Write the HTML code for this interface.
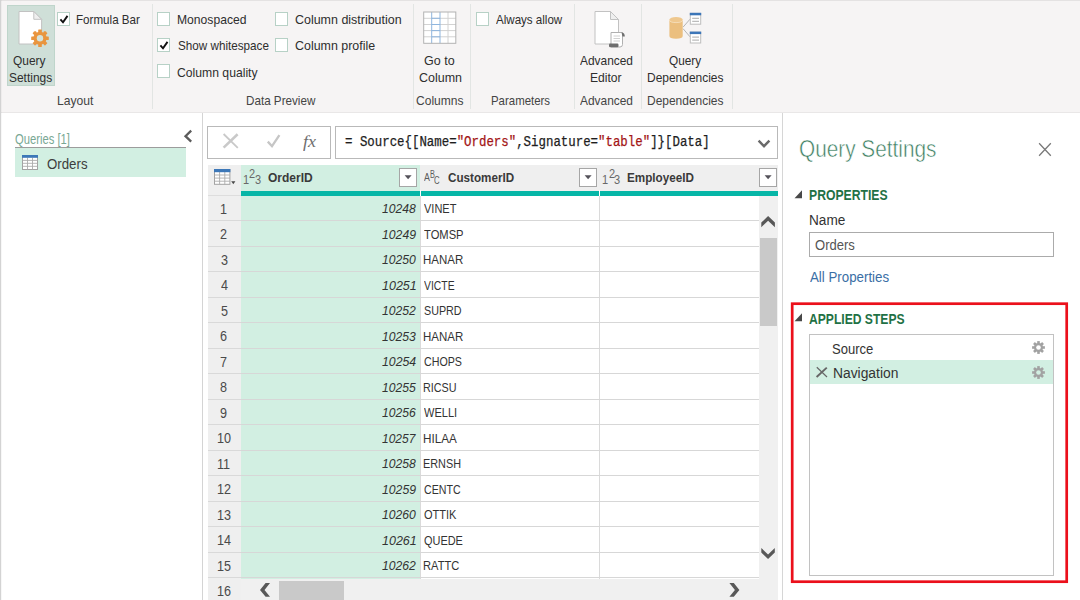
<!DOCTYPE html>
<html lang="en">
<head>
<meta charset="utf-8">
<title>Power Query Editor</title>
<style>
*{box-sizing:border-box;margin:0;padding:0}
html,body{width:1080px;height:600px;overflow:hidden;background:#fff}
body{position:relative;font-family:"Liberation Sans",sans-serif;color:#333;font-size:13px}
.a{position:absolute}
svg{position:absolute;overflow:visible}
.t{position:absolute;white-space:nowrap;line-height:16px;height:16px;transform-origin:0 0}
#ribbon{left:0;top:0;width:1080px;height:113px;background:#f6f4f4}
.sep{position:absolute;top:4px;width:1px;height:105px;background:#e2e5e3}
.cb{position:absolute;width:13px;height:14px;background:#fff;border:1px solid #b7d1c6}
</style>
</head>
<body>
<!-- RIBBON -->
<div id="ribbon" class="a">
<div class="a" style="left:0;top:0;width:1080px;height:1px;background:#e4e2e2"></div>
<div class="a" style="left:0;top:112px;width:1080px;height:1px;background:#e9e7e7"></div>
<div class="a" style="left:7px;top:5px;width:48px;height:81px;background:#cfdfd8;border:1px solid #bfd5cb"></div>
<svg style="left:0;top:0" width="60" height="60" viewBox="0 0 60 60">
 <path d="M19 11.5H33.8L41.6 19.3V44H19Z" fill="#fff" stroke="#c2c2c2" stroke-width="1"/>
 <path d="M33.8 11.5V19.3H41.6Z" fill="#efefef" stroke="#c2c2c2" stroke-width="1" stroke-linejoin="round"/>
 <g transform="translate(40,38.2)" fill="#e9953f">
  <rect x="-1.8" y="-8.8" width="3.6" height="17.6" rx="0.6"/>
  <rect x="-1.8" y="-8.8" width="3.6" height="17.6" rx="0.6" transform="rotate(45)"/>
  <rect x="-1.8" y="-8.8" width="3.6" height="17.6" rx="0.6" transform="rotate(90)"/>
  <rect x="-1.8" y="-8.8" width="3.6" height="17.6" rx="0.6" transform="rotate(135)"/>
  <circle r="6.5"/>
  <circle r="3.2" fill="#d4e3dc"/>
 </g>
</svg>
<div class="t" style="left:13.35px;top:53px;transform:scaleX(0.9166);color:#2e2e2e">Query</div>
<div class="t" style="left:8.94px;top:70px;transform:scaleX(0.9181);color:#2e2e2e">Settings</div>
<div class="cb" style="left:57px;top:12px"></div>
<svg style="left:57px;top:12px" width="13" height="14" viewBox="0 0 13 14"><path d="M3.4 7.4L6 10.3L10.5 3.9" fill="none" stroke="#111" stroke-width="1.9"/></svg>
<div class="t" style="left:75.81px;top:12px;transform:scaleX(0.8936);color:#2e2e2e">Formula Bar</div>
<div class="t" style="left:57.37px;top:93px;transform:scaleX(0.9324);color:#444">Layout</div>
<div class="sep" style="left:152px"></div>
<div class="cb" style="left:157px;top:12px"></div>
<div class="t" style="left:177.07px;top:12px;transform:scaleX(0.9331);color:#2e2e2e">Monospaced</div>
<div class="cb" style="left:157px;top:38px"></div>
<svg style="left:157px;top:38px" width="13" height="14" viewBox="0 0 13 14"><path d="M3.4 7.4L6 10.3L10.5 3.9" fill="none" stroke="#111" stroke-width="1.9"/></svg>
<div class="t" style="left:177.55px;top:38px;transform:scaleX(0.8988);color:#2e2e2e">Show whitespace</div>
<div class="cb" style="left:157px;top:64px"></div>
<div class="t" style="left:177.44px;top:65px;transform:scaleX(0.9369);color:#2e2e2e">Column quality</div>
<div class="cb" style="left:275px;top:12px"></div>
<div class="t" style="left:295.18px;top:12px;transform:scaleX(0.9582);color:#2e2e2e">Column distribution</div>
<div class="cb" style="left:275px;top:38px"></div>
<div class="t" style="left:295.43px;top:38px;transform:scaleX(0.9554);color:#2e2e2e">Column profile</div>
<div class="t" style="left:246.10px;top:93px;transform:scaleX(0.8964);color:#444">Data Preview</div>
<div class="sep" style="left:413px"></div>
<svg style="left:0;top:0" width="470" height="50" viewBox="0 0 470 50">
 <rect x="423.7" y="12" width="32.1" height="31.3" fill="#fff"/>
 <g stroke="#d2d2d2" stroke-width="1" fill="none">
  <path d="M423.7 18.3H455.8M423.7 24.5H455.8M423.7 30.6H455.8M423.7 36.8H455.8M448 12V43.3"/>
 </g>
 <g stroke="#8fb6de" stroke-width="1" fill="none">
  <path d="M431.7 12V43.3M440 12V43.3M431.7 18.3H440M431.7 24.5H440M431.7 30.6H440M431.7 36.8H440"/>
 </g>
 <rect x="423.7" y="12" width="32.1" height="31.3" fill="none" stroke="#b2b2b2" stroke-width="1"/>
</svg>
<div class="t" style="left:424.42px;top:53px;transform:scaleX(0.9620);color:#2e2e2e">Go to</div>
<div class="t" style="left:418.62px;top:70px;transform:scaleX(0.9593);color:#2e2e2e">Column</div>
<div class="t" style="left:416.14px;top:93px;transform:scaleX(0.9265);color:#444">Columns</div>
<div class="sep" style="left:470px"></div>
<div class="cb" style="left:476px;top:12px"></div>
<div class="t" style="left:496.20px;top:12px;transform:scaleX(0.8896);color:#2e2e2e">Always allow</div>
<div class="t" style="left:490.82px;top:93px;transform:scaleX(0.8786);color:#444">Parameters</div>
<div class="sep" style="left:574px"></div>
<svg style="left:0;top:0" width="640" height="50" viewBox="0 0 640 50">
 <path d="M595 11.5H610.5L618.5 19.5V44H595Z" fill="#fff" stroke="#c2c2c2" stroke-width="1"/>
 <path d="M610.5 11.5V19.5H618.5Z" fill="#efefef" stroke="#c2c2c2" stroke-width="1" stroke-linejoin="round"/>
 <path d="M611 32.5H622.5V44.5Q622.5 47 620 47H611Z" fill="#fff" stroke="#b0b0b0" stroke-width="1"/>
 <path d="M613.5 36H620M613.5 38.5H620M613.5 41H620" stroke="#d0d0d0" stroke-width="1"/>
 <rect x="609" y="43.5" width="9.5" height="3.8" rx="1.2" fill="#6e6e6e"/>
 <path d="M621.5 32.5Q624.8 32.5 624.8 36.5H622.5Z" fill="#6e6e6e"/>
</svg>
<div class="t" style="left:580.00px;top:53px;transform:scaleX(0.9159);color:#2e2e2e">Advanced</div>
<div class="t" style="left:589.87px;top:70px;transform:scaleX(0.9290);color:#2e2e2e">Editor</div>
<div class="t" style="left:580.00px;top:93px;transform:scaleX(0.9159);color:#444">Advanced</div>
<div class="sep" style="left:641px"></div>
<svg style="left:0;top:0" width="740" height="50" viewBox="0 0 740 50">
 <path d="M683 27.2L690 19.2M683 28.6L690 36.8" stroke="#b4b4b4" stroke-width="1" fill="none"/>
 <path d="M669.4 19.8V36Q669.4 38.8 676 38.8Q682.7 38.8 682.7 36V19.8Z" fill="#ebbf7f"/>
 <ellipse cx="676.05" cy="19.8" rx="6.65" ry="2.8" fill="#efc88f"/>
 <path d="M669.4 19.8Q669.4 22.6 676.05 22.6Q682.7 22.6 682.7 19.8" fill="none" stroke="#f8e6cb" stroke-width="0.7"/>
<g transform="translate(0,0)">
  <rect x="690.3" y="13.4" width="10.4" height="10.8" fill="#fff" stroke="#bdbdbd" stroke-width="1"/>
  <rect x="689.8" y="12.8" width="11.4" height="2.5" fill="#3c76b8"/>
  <path d="M692.2 18.4H699M692.2 21.3H699" stroke="#bcbcbc" stroke-width="1.2"/>
 </g><g transform="translate(0,18.8)">
  <rect x="690.3" y="13.4" width="10.4" height="10.8" fill="#fff" stroke="#bdbdbd" stroke-width="1"/>
  <rect x="689.8" y="12.8" width="11.4" height="2.5" fill="#3c76b8"/>
  <path d="M692.2 18.4H699M692.2 21.3H699" stroke="#bcbcbc" stroke-width="1.2"/>
 </g>
</svg>
<div class="t" style="left:668.66px;top:53px;transform:scaleX(0.9080);color:#2e2e2e">Query</div>
<div class="t" style="left:646.88px;top:70px;transform:scaleX(0.9203);color:#2e2e2e">Dependencies</div>
<div class="t" style="left:646.88px;top:93px;transform:scaleX(0.9203);color:#444">Dependencies</div>
<div class="sep" style="left:732px"></div>
</div>
<!-- QUERIES PANE -->
<div class="a" style="left:0;top:0;width:1px;height:600px;background:#d3d3d3"></div><div class="a" style="left:1px;top:0;width:1px;height:600px;background:rgba(0,0,0,.03)"></div>
<div class="a" style="left:202px;top:113px;width:1px;height:487px;background:#d4d4d4"></div>
<div class="t" style="left:14.84px;top:131px;transform:scaleX(0.7735);font-size:14.5px;color:#79a894">Queries [1]</div>
<svg style="left:180px;top:126px" width="16" height="20" viewBox="0 0 16 20"><path d="M11.2 4.7L5.5 10.2L11.2 15.7" fill="none" stroke="#5c5c5c" stroke-width="2.3"/></svg>
<div class="a" style="left:15px;top:146.5px;width:171px;height:1.5px;background:#9c9c9c"></div>
<div class="a" style="left:15px;top:148px;width:171px;height:29px;background:#d2efe2"></div>
<svg style="left:22px;top:155px" width="16" height="15" viewBox="0 0 16 15">
 <rect x="0.5" y="0.5" width="15" height="14" fill="#fff" stroke="#a2a2a2"/>
 <path d="M0.5 5.4H15.5M0.5 8.3H15.5M0.5 11.3H15.5M5.5 2.7V14.5M10.5 2.7V14.5" stroke="#ababab" stroke-width="0.9" fill="none"/>
 <rect x="0" y="0" width="16" height="2.8" fill="#3d78b8"/>
</svg>
<div class="t" style="left:47.43px;top:156px;transform:scaleX(0.9476);font-size:14px;color:#3d3d3d">Orders</div>
<!-- FORMULA BAR -->
<div class="a" style="left:207px;top:126px;width:124px;height:33px;border:1px solid #b9b9b9;background:#fff"></div>
<div class="a" style="left:335px;top:126px;width:443px;height:33px;border:1px solid #b9b9b9;background:#fff"></div>
<svg style="left:207px;top:126px" width="124" height="33" viewBox="0 0 124 33">
 <path d="M16.6 8L30.8 21.8" stroke="#c9c9c9" stroke-width="1.8" fill="none"/>
 <path d="M30.6 8.3L16.6 21.6" stroke="#c9c9c9" stroke-width="2.6" fill="none"/>
 <path d="M60.8 15.6L65 20.2L72.4 9.2" stroke="#c6c6c6" stroke-width="2.3" fill="none"/>
</svg>
<div class="t" style="left:303.00px;top:125px;transform:scaleX(1.0351);font-size:17.5px;line-height:32px;height:32px;font-family:'Liberation Serif',serif;font-style:italic;color:#6e6e6e">fx</div>
<div class="t" style="left:345.07px;top:135px;transform:scaleX(0.8988);font-size:13.8px;font-family:'Liberation Mono',monospace;color:#1e1e1e;-webkit-text-stroke:0.25px currentColor">= Source{[Name=<span style="color:#a31515">"Orders"</span>,Signature=<span style="color:#a31515">"table"</span>]}[Data]</div>
<svg style="left:755px;top:136px" width="18" height="14" viewBox="0 0 18 14"><path d="M3.6 4.6L9 10.2L14.4 4.6" fill="none" stroke="#6a6a6a" stroke-width="2.4"/></svg>
<!-- GRID -->
<div class="a" style="left:208px;top:165px;width:33px;height:435px;background:#efefef"></div>
<div class="a" style="left:241px;top:165px;width:179px;height:414px;background:#d2efe2"></div>
<div class="a" style="left:420px;top:165px;width:358px;height:26px;background:#efefef"></div>
<div class="a" style="left:241px;top:190.5px;width:537px;height:5px;background:#06b6a7"></div>
<div class="a" style="left:419.5px;top:190px;width:1px;height:6px;background:#fff"></div>
<div class="a" style="left:599px;top:190px;width:1px;height:6px;background:#fff"></div>
<div class="a" style="left:208px;top:194.5px;width:33px;height:1px;background:#dddddd"></div>
<div class="a" style="left:420px;top:196px;width:1px;height:383px;background:#dadada"></div>
<div class="a" style="left:599px;top:196px;width:1px;height:383px;background:#dadada"></div>
<svg style="left:213.7px;top:169.3px" width="24" height="16" viewBox="0 0 24 16">
 <rect x="0.5" y="0.5" width="15.4" height="14.8" fill="#fff" stroke="#a2a2a2"/>
 <path d="M0.5 6H15.9M0.5 9.1H15.9M0.5 12.2H15.9M5.6 3V15.3M10.8 3V15.3" stroke="#ababab" stroke-width="0.9" fill="none"/>
 <rect x="0" y="0" width="16.4" height="3.2" fill="#3d78b8"/>
 <path d="M17.2 12.3H21.4L19.3 15.2Z" fill="#4a4a4a"/>
</svg>
<div class="t" style="left:242.64px;top:172px;transform:scaleX(0.8800);font-size:12.5px;color:#686868">1</div><div class="t" style="left:249.22px;top:166px;transform:scaleX(0.8800);font-size:12.5px;color:#686868">2</div><div class="t" style="left:254.61px;top:172px;transform:scaleX(0.8800);font-size:12.5px;color:#686868">3</div>
<div class="t" style="left:267.74px;top:170px;transform:scaleX(0.9238);font-weight:bold;color:#3a3a3a">OrderID</div>
<div class="t" style="left:423.65px;top:169px;transform:scaleX(0.8200);font-size:10.8px;color:#5c5c5c">A</div><div class="t" style="left:429.95px;top:166px;transform:scaleX(0.6800);font-size:10.8px;color:#5c5c5c">B</div><div class="t" style="left:434.26px;top:172px;transform:scaleX(0.7200);font-size:10.8px;color:#5c5c5c">C</div>
<div class="t" style="left:447.55px;top:170px;transform:scaleX(0.8970);font-weight:bold;color:#3a3a3a">CustomerID</div>
<div class="t" style="left:602.34px;top:172px;transform:scaleX(0.8800);font-size:12.5px;color:#686868">1</div><div class="t" style="left:608.92px;top:166px;transform:scaleX(0.8800);font-size:12.5px;color:#686868">2</div><div class="t" style="left:614.31px;top:172px;transform:scaleX(0.8800);font-size:12.5px;color:#686868">3</div>
<div class="t" style="left:627.08px;top:170px;transform:scaleX(0.8998);font-weight:bold;color:#3a3a3a">EmployeeID</div>
<div class="a" style="left:399px;top:168px;width:18px;height:19px;background:#fff;border:1px solid #a6a6a6"></div><svg style="left:399px;top:168px" width="18" height="19" viewBox="0 0 18 19"><path d="M5.6 7.3H12.6L9.1 11.3Z" fill="#55525a"/></svg>
<div class="a" style="left:579px;top:168px;width:18px;height:19px;background:#fff;border:1px solid #a6a6a6"></div><svg style="left:579px;top:168px" width="18" height="19" viewBox="0 0 18 19"><path d="M5.6 7.3H12.6L9.1 11.3Z" fill="#55525a"/></svg>
<div class="a" style="left:759px;top:168px;width:18px;height:19px;background:#fff;border:1px solid #a6a6a6"></div><svg style="left:759px;top:168px" width="18" height="19" viewBox="0 0 18 19"><path d="M5.6 7.3H12.6L9.1 11.3Z" fill="#55525a"/></svg>
<div class="a" style="left:208px;top:220.0px;width:33px;height:1px;background:#d9d9d9"></div>
<div class="a" style="left:241px;top:220.0px;width:518px;height:1px;background:#d7d7d7"></div>
<div class="t" style="left:220.31px;top:201px;transform:scaleX(0.9000);font-size:14px;color:#4a4a4a">1</div>
<div class="t" style="left:381.92px;top:201px;transform:scaleX(0.9352);font-style:italic;color:#333">10248</div>
<div class="t" style="left:424.20px;top:201px;transform:scaleX(0.8464);color:#333">VINET</div>
<div class="a" style="left:208px;top:245.5px;width:33px;height:1px;background:#d9d9d9"></div>
<div class="a" style="left:241px;top:245.5px;width:518px;height:1px;background:#d7d7d7"></div>
<div class="t" style="left:220.49px;top:226px;transform:scaleX(0.9000);font-size:14px;color:#4a4a4a">2</div>
<div class="t" style="left:381.92px;top:227px;transform:scaleX(0.9405);font-style:italic;color:#333">10249</div>
<div class="t" style="left:424.03px;top:227px;transform:scaleX(0.8600);color:#333">TOMSP</div>
<div class="a" style="left:208px;top:271.0px;width:33px;height:1px;background:#d9d9d9"></div>
<div class="a" style="left:241px;top:271.0px;width:518px;height:1px;background:#d7d7d7"></div>
<div class="t" style="left:220.53px;top:252px;transform:scaleX(0.9000);font-size:14px;color:#4a4a4a">3</div>
<div class="t" style="left:381.92px;top:252px;transform:scaleX(0.9352);font-style:italic;color:#333">10250</div>
<div class="t" style="left:423.32px;top:252px;transform:scaleX(0.8835);color:#333">HANAR</div>
<div class="a" style="left:208px;top:296.5px;width:33px;height:1px;background:#d9d9d9"></div>
<div class="a" style="left:241px;top:296.5px;width:518px;height:1px;background:#d7d7d7"></div>
<div class="t" style="left:220.53px;top:277px;transform:scaleX(0.9000);font-size:14px;color:#4a4a4a">4</div>
<div class="t" style="left:381.91px;top:278px;transform:scaleX(0.9621);font-style:italic;color:#333">10251</div>
<div class="t" style="left:424.20px;top:278px;transform:scaleX(0.7987);color:#333">VICTE</div>
<div class="a" style="left:208px;top:322.0px;width:33px;height:1px;background:#d9d9d9"></div>
<div class="a" style="left:241px;top:322.0px;width:518px;height:1px;background:#d7d7d7"></div>
<div class="t" style="left:220.53px;top:303px;transform:scaleX(0.9000);font-size:14px;color:#4a4a4a">5</div>
<div class="t" style="left:381.92px;top:303px;transform:scaleX(0.9379);font-style:italic;color:#333">10252</div>
<div class="t" style="left:423.79px;top:303px;transform:scaleX(0.8262);color:#333">SUPRD</div>
<div class="a" style="left:208px;top:347.5px;width:33px;height:1px;background:#d9d9d9"></div>
<div class="a" style="left:241px;top:347.5px;width:518px;height:1px;background:#d7d7d7"></div>
<div class="t" style="left:220.44px;top:328px;transform:scaleX(0.9000);font-size:14px;color:#4a4a4a">6</div>
<div class="t" style="left:381.92px;top:329px;transform:scaleX(0.9352);font-style:italic;color:#333">10253</div>
<div class="t" style="left:423.32px;top:329px;transform:scaleX(0.8835);color:#333">HANAR</div>
<div class="a" style="left:208px;top:373.0px;width:33px;height:1px;background:#d9d9d9"></div>
<div class="a" style="left:241px;top:373.0px;width:518px;height:1px;background:#d7d7d7"></div>
<div class="t" style="left:220.49px;top:354px;transform:scaleX(0.9000);font-size:14px;color:#4a4a4a">7</div>
<div class="t" style="left:381.92px;top:354px;transform:scaleX(0.9458);font-style:italic;color:#333">10254</div>
<div class="t" style="left:423.71px;top:354px;transform:scaleX(0.8211);color:#333">CHOPS</div>
<div class="a" style="left:208px;top:398.5px;width:33px;height:1px;background:#d9d9d9"></div>
<div class="a" style="left:241px;top:398.5px;width:518px;height:1px;background:#d7d7d7"></div>
<div class="t" style="left:220.49px;top:379px;transform:scaleX(0.9000);font-size:14px;color:#4a4a4a">8</div>
<div class="t" style="left:381.92px;top:380px;transform:scaleX(0.9326);font-style:italic;color:#333">10255</div>
<div class="t" style="left:423.37px;top:380px;transform:scaleX(0.8295);color:#333">RICSU</div>
<div class="a" style="left:208px;top:424.0px;width:33px;height:1px;background:#d9d9d9"></div>
<div class="a" style="left:241px;top:424.0px;width:518px;height:1px;background:#d7d7d7"></div>
<div class="t" style="left:220.49px;top:405px;transform:scaleX(0.9000);font-size:14px;color:#4a4a4a">9</div>
<div class="t" style="left:381.92px;top:405px;transform:scaleX(0.9326);font-style:italic;color:#333">10256</div>
<div class="t" style="left:424.20px;top:405px;transform:scaleX(0.8496);color:#333">WELLI</div>
<div class="a" style="left:208px;top:449.5px;width:33px;height:1px;background:#d9d9d9"></div>
<div class="a" style="left:241px;top:449.5px;width:518px;height:1px;background:#d7d7d7"></div>
<div class="t" style="left:216.76px;top:430px;transform:scaleX(0.9000);font-size:14px;color:#4a4a4a">10</div>
<div class="t" style="left:381.92px;top:431px;transform:scaleX(0.9224);font-style:italic;color:#333">10257</div>
<div class="t" style="left:423.30px;top:431px;transform:scaleX(0.8989);color:#333">HILAA</div>
<div class="a" style="left:208px;top:475.0px;width:33px;height:1px;background:#d9d9d9"></div>
<div class="a" style="left:241px;top:475.0px;width:518px;height:1px;background:#d7d7d7"></div>
<div class="t" style="left:217.27px;top:456px;transform:scaleX(0.9000);font-size:14px;color:#4a4a4a">11</div>
<div class="t" style="left:381.92px;top:456px;transform:scaleX(0.9352);font-style:italic;color:#333">10258</div>
<div class="t" style="left:423.37px;top:456px;transform:scaleX(0.8341);color:#333">ERNSH</div>
<div class="a" style="left:208px;top:500.5px;width:33px;height:1px;background:#d9d9d9"></div>
<div class="a" style="left:241px;top:500.5px;width:518px;height:1px;background:#d7d7d7"></div>
<div class="t" style="left:216.85px;top:481px;transform:scaleX(0.9000);font-size:14px;color:#4a4a4a">12</div>
<div class="t" style="left:381.92px;top:482px;transform:scaleX(0.9405);font-style:italic;color:#333">10259</div>
<div class="t" style="left:423.71px;top:482px;transform:scaleX(0.8172);color:#333">CENTC</div>
<div class="a" style="left:208px;top:526.0px;width:33px;height:1px;background:#d9d9d9"></div>
<div class="a" style="left:241px;top:526.0px;width:518px;height:1px;background:#d7d7d7"></div>
<div class="t" style="left:216.81px;top:507px;transform:scaleX(0.9000);font-size:14px;color:#4a4a4a">13</div>
<div class="t" style="left:381.92px;top:507px;transform:scaleX(0.9352);font-style:italic;color:#333">10260</div>
<div class="t" style="left:423.69px;top:507px;transform:scaleX(0.8483);color:#333">OTTIK</div>
<div class="a" style="left:208px;top:551.5px;width:33px;height:1px;background:#d9d9d9"></div>
<div class="a" style="left:241px;top:551.5px;width:518px;height:1px;background:#d7d7d7"></div>
<div class="t" style="left:216.72px;top:532px;transform:scaleX(0.9000);font-size:14px;color:#4a4a4a">14</div>
<div class="t" style="left:381.91px;top:533px;transform:scaleX(0.9621);font-style:italic;color:#333">10261</div>
<div class="t" style="left:423.70px;top:533px;transform:scaleX(0.8415);color:#333">QUEDE</div>
<div class="a" style="left:208px;top:577.0px;width:33px;height:1px;background:#d9d9d9"></div>
<div class="a" style="left:241px;top:577.0px;width:518px;height:1px;background:#d7d7d7"></div>
<div class="t" style="left:216.81px;top:558px;transform:scaleX(0.9000);font-size:14px;color:#4a4a4a">15</div>
<div class="t" style="left:381.92px;top:558px;transform:scaleX(0.9379);font-style:italic;color:#333">10262</div>
<div class="t" style="left:423.34px;top:558px;transform:scaleX(0.8562);color:#333">RATTC</div>
<div class="t" style="left:216.81px;top:583px;transform:scaleX(0.9000);font-size:14px;color:#4a4a4a">16</div>
<div class="a" style="left:759px;top:196px;width:19px;height:383px;background:#f0f0f0"></div>
<div class="a" style="left:760px;top:238px;width:17px;height:88px;background:#c9c9c9"></div>
<div class="a" style="left:241px;top:579px;width:537px;height:21px;background:#f0f0f0"></div>
<div class="a" style="left:279px;top:581px;width:65px;height:19px;background:#c9c9c9"></div>
<svg style="left:0;top:0" width="1080" height="600" viewBox="0 0 1080 600"><g fill="#585858"><path d="M761.3 227.2V222.6L768.1 216L774.9 222.6V227.2L768.1 220.7Z"/><path d="M761.3 548V552.6L768.05 559L774.8 552.6V548L768.05 554.4Z"/><path d="M270 583H265.6L260 589.9L265.6 596.8H270L264.5 589.9Z"/><path d="M729.4 583H733.8L739.4 589.9L733.8 596.8H729.4L734.9 589.9Z"/></g></svg>
<!-- QUERY SETTINGS -->
<div class="a" style="left:782px;top:113px;width:1px;height:487px;background:#d6d6d6"></div>
<div class="t" style="left:799.07px;top:133px;transform:scaleX(0.8482);font-size:24.5px;line-height:32px;height:32px;color:#3a7d5e;-webkit-text-stroke:0.55px #fff">Query Settings</div>
<svg style="left:1036px;top:141px" width="18" height="18" viewBox="0 0 18 18"><path d="M3.1 2.3L14.8 14.7M14.8 2.3L3.1 14.7" stroke="#787878" stroke-width="1.25" fill="none"/></svg>
<svg style="left:794px;top:190.2px" width="9" height="9" viewBox="0 0 9 9"><path d="M8 0.3V8.2H0.5Z" fill="#484848"/></svg>
<div class="t" style="left:809.24px;top:187px;transform:scaleX(0.8405);font-size:14.5px;font-weight:bold;color:#1f7145">PROPERTIES</div>
<div class="t" style="left:808.53px;top:212px;transform:scaleX(0.9731);font-size:14px;color:#333">Name</div>
<div class="a" style="left:809px;top:231.5px;width:245px;height:25.5px;border:1px solid #ababab;background:#fff"></div>
<div class="t" style="left:815.34px;top:237px;transform:scaleX(0.9308);font-size:14px;color:#555">Orders</div>
<div class="t" style="left:809.60px;top:269px;transform:scaleX(0.9498);font-size:14px;color:#3a6ea5">All Properties</div>
<svg style="left:0;top:0" width="1080" height="600" viewBox="0 0 1080 600"><rect x="792.2" y="303.7" width="274.5" height="278" fill="none" stroke="#eb101b" stroke-width="2.7"/></svg>
<svg style="left:794px;top:313.1px" width="9" height="9" viewBox="0 0 9 9"><path d="M8 0.3V8.2H0.5Z" fill="#484848"/></svg>
<div class="t" style="left:809.45px;top:311px;transform:scaleX(0.8351);font-size:14.5px;font-weight:bold;color:#1f7145">APPLIED STEPS</div>
<div class="a" style="left:809px;top:334px;width:245px;height:242px;border:1px solid #c2c2c2;background:#fff"></div>
<div class="t" style="left:832.24px;top:341px;transform:scaleX(0.9312);font-size:14px;color:#333">Source</div>
<div class="a" style="left:810px;top:360px;width:243px;height:24px;background:#d2efe2"></div>
<svg style="left:814px;top:365px" width="16" height="14" viewBox="0 0 16 14"><path d="M2.8 2.3L13 12" stroke="#666" stroke-width="1.2" fill="none"/><path d="M12.8 2.6L2.6 12" stroke="#666" stroke-width="1.9" fill="none"/></svg>
<div class="t" style="left:832.51px;top:365px;transform:scaleX(0.9881);font-size:14px;color:#333">Navigation</div>
<svg style="left:1031.5px;top:341px" width="13" height="13" viewBox="-6.5 -6.5 13 13"><g fill="#a2a2a2">
 <rect x="-1.3" y="-6.4" width="2.6" height="12.8"/><rect x="-1.3" y="-6.4" width="2.6" height="12.8" transform="rotate(45)"/>
 <rect x="-1.3" y="-6.4" width="2.6" height="12.8" transform="rotate(90)"/><rect x="-1.3" y="-6.4" width="2.6" height="12.8" transform="rotate(135)"/>
 <circle r="4.5"/></g><circle r="2.3" fill="#fff"/></svg>
<svg style="left:1031.5px;top:365.5px" width="13" height="13" viewBox="-6.5 -6.5 13 13"><g fill="#a2a2a2">
 <rect x="-1.3" y="-6.4" width="2.6" height="12.8"/><rect x="-1.3" y="-6.4" width="2.6" height="12.8" transform="rotate(45)"/>
 <rect x="-1.3" y="-6.4" width="2.6" height="12.8" transform="rotate(90)"/><rect x="-1.3" y="-6.4" width="2.6" height="12.8" transform="rotate(135)"/>
 <circle r="4.5"/></g><circle r="2.3" fill="#d2efe2"/></svg>
</body>
</html>
